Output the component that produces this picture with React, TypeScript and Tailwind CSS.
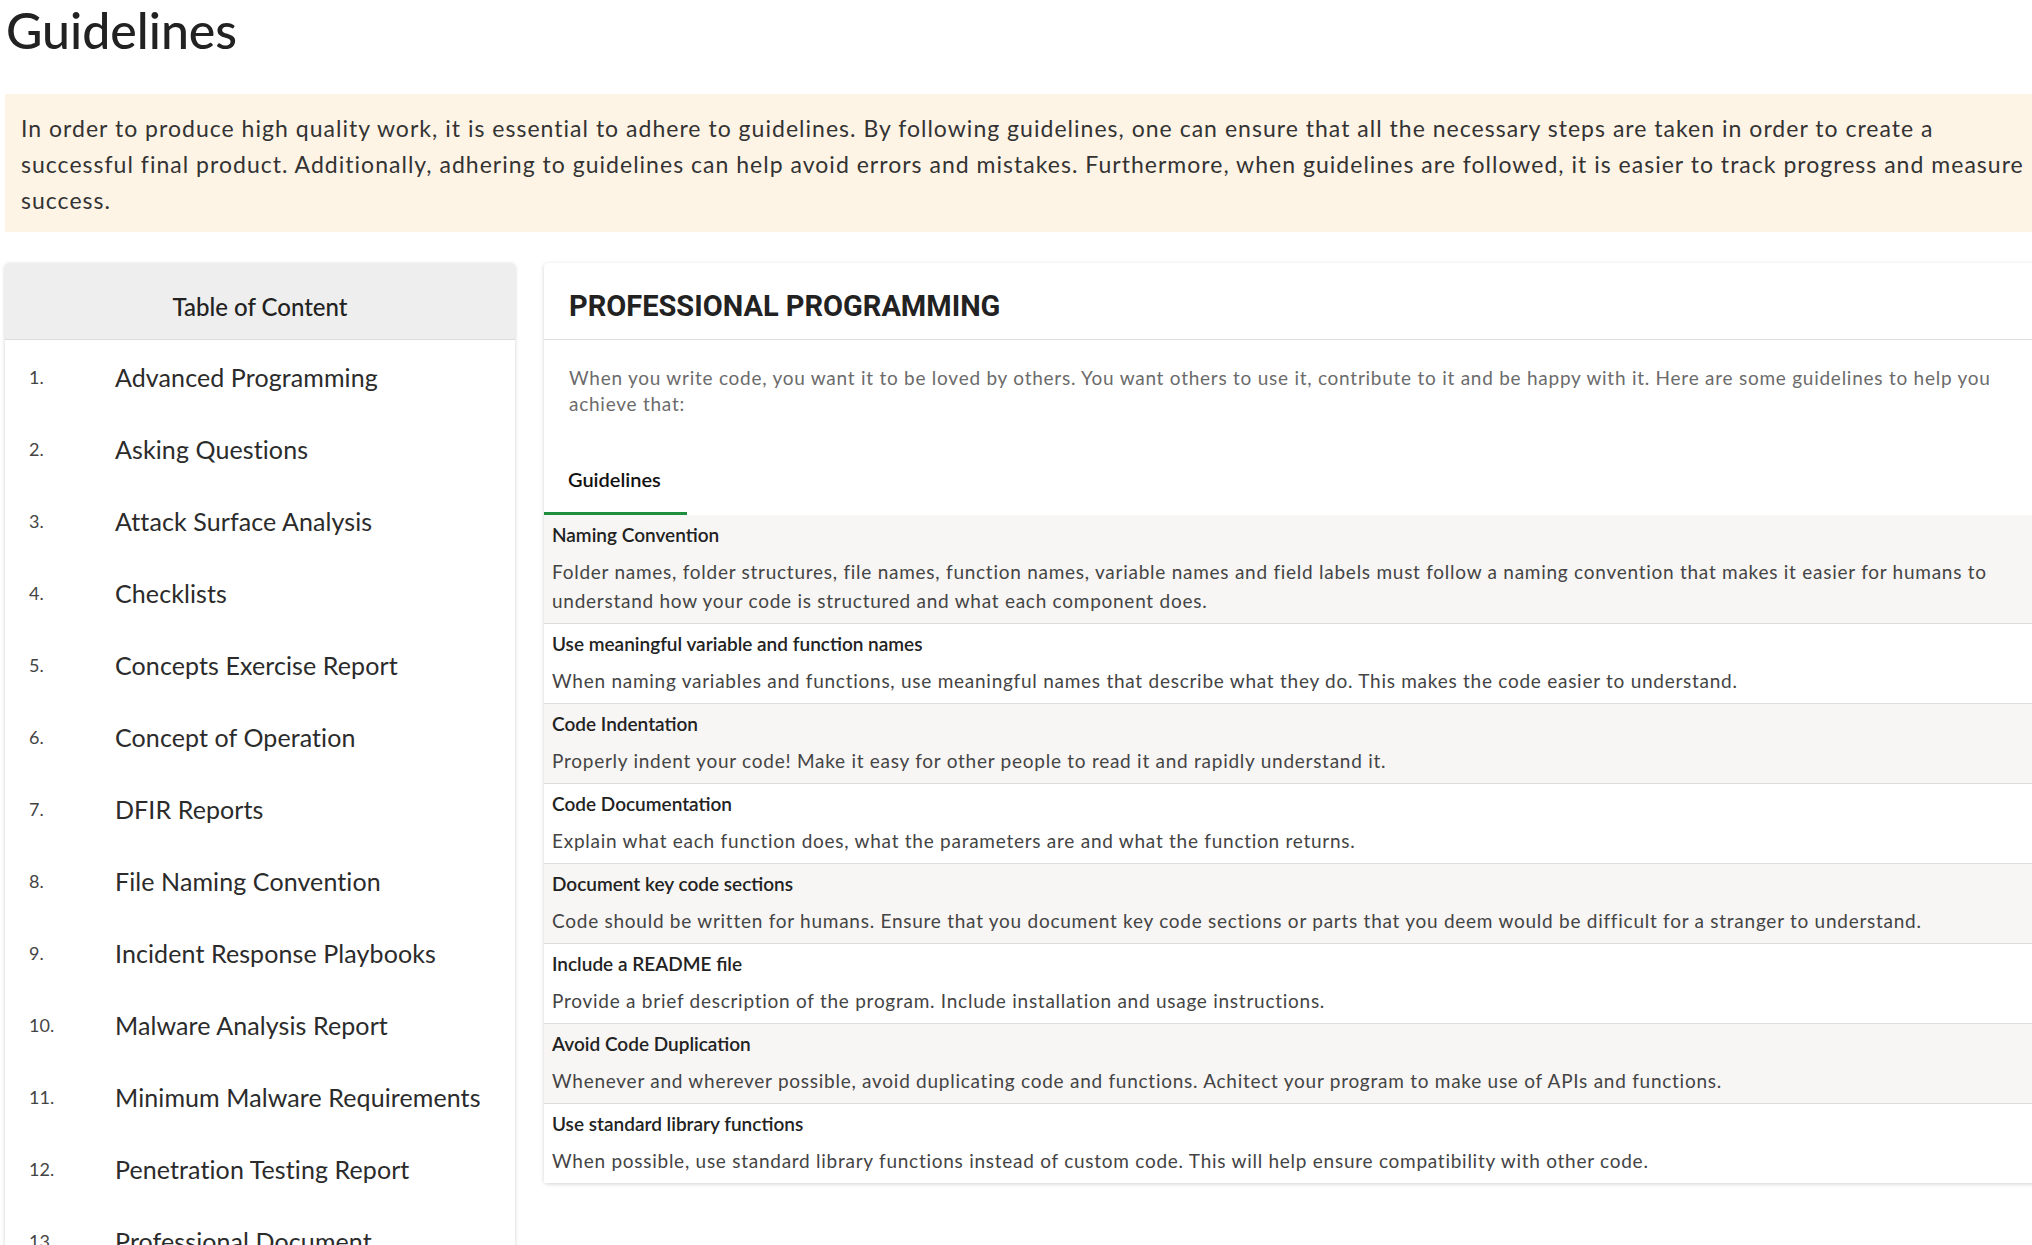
import React from "react";

const toc = [
  "Advanced Programming",
  "Asking Questions",
  "Attack Surface Analysis",
  "Checklists",
  "Concepts Exercise Report",
  "Concept of Operation",
  "DFIR Reports",
  "File Naming Convention",
  "Incident Response Playbooks",
  "Malware Analysis Report",
  "Minimum Malware Requirements",
  "Penetration Testing Report",
  "Professional Document",
  "Professional Programming",
  "Threat Hunting Report",
];

const rows: { title: string; desc: React.ReactNode }[] = [
  {
    title: "Naming Convention",
    desc: (
      <>
        Folder names, folder structures, file names, function names, variable names and field labels must follow a naming convention that makes it easier for humans to
        <br />
        understand how your code is structured and what each component does.
      </>
    ),
  },
  {
    title: "Use meaningful variable and function names",
    desc: "When naming variables and functions, use meaningful names that describe what they do. This makes the code easier to understand.",
  },
  {
    title: "Code Indentation",
    desc: "Properly indent your code! Make it easy for other people to read it and rapidly understand it.",
  },
  {
    title: "Code Documentation",
    desc: "Explain what each function does, what the parameters are and what the function returns.",
  },
  {
    title: "Document key code sections",
    desc: "Code should be written for humans. Ensure that you document key code sections or parts that you deem would be difficult for a stranger to understand.",
  },
  {
    title: "Include a README file",
    desc: "Provide a brief description of the program. Include installation and usage instructions.",
  },
  {
    title: "Avoid Code Duplication",
    desc: "Whenever and wherever possible, avoid duplicating code and functions. Achitect your program to make use of APIs and functions.",
  },
  {
    title: "Use standard library functions",
    desc: "When possible, use standard library functions instead of custom code. This will help ensure compatibility with other code.",
  },
];

export default function App() {
  return (
    <div className="w-[2032px] h-[1245px] overflow-hidden bg-white font-[Lato,sans-serif] text-[#333]">
      <div className="w-[2100px] pl-[5px]">
        <h1 className="mt-[3px] text-[50px] leading-[55px] font-medium text-[#222] pl-[1px]">Guidelines</h1>

        <div className="mt-[36px] bg-[#fef4e6] pl-[16px] pr-[16px] pt-[16px] pb-[14px] text-[23px] leading-[36px] tracking-[1.02px] text-[#333]">
          In order to produce high quality work, it is essential to adhere to guidelines. By following guidelines, one can ensure that all the necessary steps are taken in order to create a
          <br />
          successful final product. Additionally, adhering to guidelines can help avoid errors and mistakes. Furthermore, when guidelines are followed, it is easier to track progress and measure
          <br />
          success.
        </div>

        <div className="mt-[31px] flex items-start gap-[29px]">
          <div className="w-[510px] shrink-0 rounded-[4px] bg-white shadow-[0_1px_4px_rgba(0,0,0,0.18)]">
            <div className="rounded-t-[4px] border-b border-[#dcdcdc] bg-[#eeeeee] pt-[28px] pb-[16px] text-center text-[24px] leading-[32px] font-medium text-[#222]">
              Table of Content
            </div>
            <ul>
              {toc.map((t, i) => (
                <li key={t} className="flex items-start pl-[24px] pt-[21px] pb-[19px]">
                  <span className="w-[86px] shrink-0 text-[18px] leading-[32px] text-[#444]">{i + 1}.</span>
                  <span className="text-[25px] leading-[32px] text-[#2b2b2b] tracking-[0.1px]">{t}</span>
                </li>
              ))}
            </ul>
          </div>

          <div className="flex-1 rounded-[4px] bg-white shadow-[0_1px_4px_rgba(0,0,0,0.18)]">
            <div className="border-b border-[#dedede] pl-[25px] pt-[25px] pb-[15px]">
              <h2 className="font-[Roboto,sans-serif] text-[29px] leading-[36px] font-bold text-[#222]">
                PROFESSIONAL PROGRAMMING
              </h2>
            </div>
            <p className="px-[25px] pt-[25px] text-[19px] leading-[26px] tracking-[0.75px] text-[#6b6b6b]">
              When you write code, you want it to be loved by others. You want others to use it, contribute to it and be happy with it. Here are some guidelines to help you
              <br />
              achieve that:
            </p>
            <div className="mt-[30px] flex">
              <div className="w-[143px] border-b-[3px] border-[#1e8e3e] pl-[24px] pt-[20px] pb-[21px] text-[20px] leading-[24px] font-semibold text-[#111]">
                Guidelines
              </div>
            </div>
            <div>
              {rows.map((r, i) => (
                <div
                  key={r.title}
                  className={`pl-[8px] pr-[8px] pt-[8px] pb-[8px] ${i < rows.length - 1 ? "border-b border-[#dddddd]" : ""} ${i % 2 === 0 ? "bg-[#f7f6f4]" : "bg-white"}`}
                >
                  <div className="text-[19px] leading-[24px] font-semibold text-[#222]">{r.title}</div>
                  <div className="mt-[10px] text-[19px] leading-[29px] tracking-[0.74px] text-[#444]">{r.desc}</div>
                </div>
              ))}
            </div>
          </div>
        </div>
      </div>
    </div>
  );
}
